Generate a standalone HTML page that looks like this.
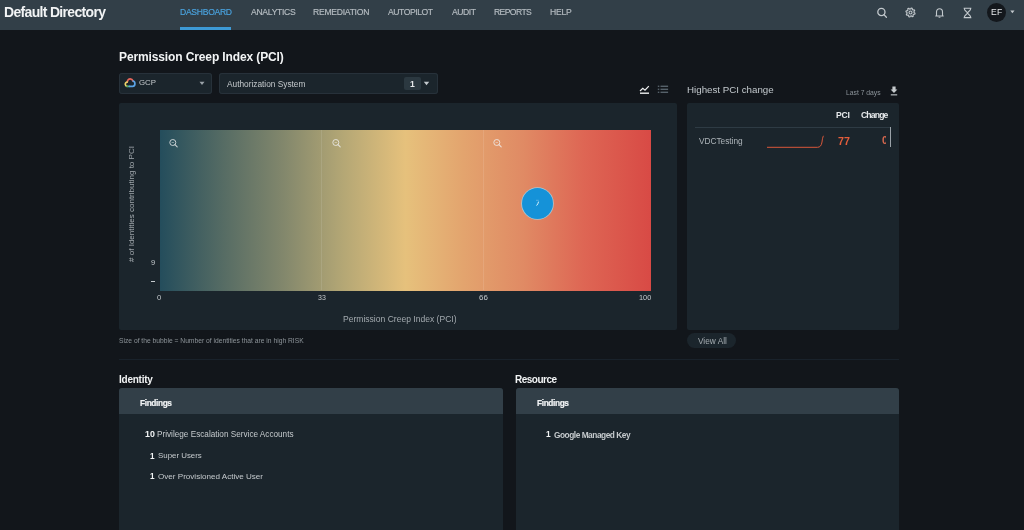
<!DOCTYPE html>
<html><head><meta charset="utf-8"><style>
html,body{margin:0;padding:0;}
body{width:1024px;height:530px;overflow:hidden;background:#12161b;position:relative;font-family:"Liberation Sans",sans-serif;}
body>div,body>svg{position:absolute;}
.t{white-space:nowrap;position:absolute;will-change:transform;}
</style></head><body>
<div style="left:0px;top:0px;width:1024px;height:30px;background:#323f48;"></div>
<div class="t" style="left:4.08px;top:5.21px;font-size:14.000px;line-height:14.000px;font-weight:bold;color:#f2f4f5;letter-spacing:-0.676px;">Default Directory</div>
<div class="t" style="left:179.89px;top:8.17px;font-size:8.600px;line-height:8.600px;font-weight:normal;color:#4aa3df;letter-spacing:-0.295px;-webkit-text-stroke:0.15px currentColor;">DASHBOARD</div>
<div class="t" style="left:250.58px;top:8.17px;font-size:8.600px;line-height:8.600px;font-weight:normal;color:#b7bec3;letter-spacing:-0.294px;-webkit-text-stroke:0.15px currentColor;">ANALYTICS</div>
<div class="t" style="left:313.29px;top:8.17px;font-size:8.600px;line-height:8.600px;font-weight:normal;color:#b7bec3;letter-spacing:-0.268px;-webkit-text-stroke:0.15px currentColor;">REMEDIATION</div>
<div class="t" style="left:387.98px;top:8.17px;font-size:8.600px;line-height:8.600px;font-weight:normal;color:#b7bec3;letter-spacing:-0.434px;-webkit-text-stroke:0.15px currentColor;">AUTOPILOT</div>
<div class="t" style="left:451.88px;top:8.17px;font-size:8.600px;line-height:8.600px;font-weight:normal;color:#b7bec3;letter-spacing:-0.471px;-webkit-text-stroke:0.15px currentColor;">AUDIT</div>
<div class="t" style="left:494.19px;top:8.17px;font-size:8.600px;line-height:8.600px;font-weight:normal;color:#b7bec3;letter-spacing:-0.604px;-webkit-text-stroke:0.15px currentColor;">REPORTS</div>
<div class="t" style="left:550.29px;top:8.17px;font-size:8.600px;line-height:8.600px;font-weight:normal;color:#b7bec3;letter-spacing:-0.237px;-webkit-text-stroke:0.15px currentColor;">HELP</div>
<div style="left:180px;top:27px;width:51px;height:3px;background:#3d9ad6;"></div>
<svg style="left:876px;top:7px" width="12" height="12" viewBox="0 0 12 12"><circle cx="5.4" cy="5" r="3.6" fill="none" stroke="#c3c9cd" stroke-width="1.3"/><path d="M7.9 7.6 L10.4 10.2" stroke="#c3c9cd" stroke-width="1.3" stroke-linecap="round"/></svg>
<svg style="left:905px;top:7px" width="11" height="11" viewBox="0 0 11 11"><path d="M9.00 5.50 L10.05 6.15 L9.75 7.26 L8.51 7.28 L7.97 7.97 L8.26 9.18 L7.26 9.75 L6.37 8.89 L5.50 9.00 L4.85 10.05 L3.74 9.75 L3.72 8.51 L3.03 7.97 L1.82 8.26 L1.25 7.26 L2.11 6.37 L2.00 5.50 L0.95 4.85 L1.25 3.74 L2.49 3.72 L3.03 3.03 L2.74 1.82 L3.74 1.25 L4.63 2.11 L5.50 2.00 L6.15 0.95 L7.26 1.25 L7.28 2.49 L7.97 3.03 L9.18 2.74 L9.75 3.74 L8.89 4.63 Z" fill="none" stroke="#c3c9cd" stroke-width="1.1" stroke-linejoin="round"/><circle cx="5.5" cy="5.5" r="1.5" fill="none" stroke="#c3c9cd" stroke-width="1.1"/></svg>
<svg style="left:934px;top:7px" width="11" height="12" viewBox="0 0 11 12"><path d="M2.5 8.5 L2.5 5 C2.5 3 3.8 1.8 5.5 1.8 C7.2 1.8 8.5 3 8.5 5 L8.5 8.5 M1.3 9 L9.7 9" fill="none" stroke="#c3c9cd" stroke-width="1.1"/><path d="M4.6 10.2 L6.4 10.2" stroke="#c3c9cd" stroke-width="1"/></svg>
<svg style="left:963px;top:7px" width="9" height="12" viewBox="0 0 9 12"><path d="M1.2 1.3 L7.8 1.3 C7.8 4 4.5 5 4.5 6 C4.5 7 7.8 8 7.8 10.6 L1.2 10.6 C1.2 8 4.5 7 4.5 6 C4.5 5 1.2 4 1.2 1.3 Z" fill="none" stroke="#c3c9cd" stroke-width="1.1"/></svg>
<div style="left:987px;top:3px;width:19px;height:19px;border-radius:50%;background:#13171c"></div>
<div class="t" style="left:990.99px;top:8.02px;font-size:8.600px;line-height:8.600px;font-weight:normal;color:#e6e9eb;letter-spacing:0.258px;">EF</div>
<svg style="left:1009.5px;top:10.3px" width="5" height="4" viewBox="0 0 5 4"><path d="M0.3 0.6 L4.5 0.6 L2.4 3.2 Z" fill="#c3c9cd"/></svg>
<div class="t" style="left:119.21px;top:51.06px;font-size:12.000px;line-height:12.000px;font-weight:bold;color:#f2f4f5;letter-spacing:-0.121px;">Permission Creep Index (PCI)</div>
<div style="left:119px;top:73px;width:93px;height:21px;background:#1b252c;border-radius:3px;box-shadow:inset 0 0 0 1px #27313a;"></div>
<svg style="left:124px;top:77px" width="12" height="11" viewBox="0 0 12 11"><g fill="none" stroke-width="1.7" stroke-linejoin="round" stroke-linecap="round"><path d="M3.2 5.0 C3.6 3.0 5.0 1.9 6.2 1.9 C7.6 1.9 8.6 2.8 9.1 4.0" stroke="#e8675c"/><path d="M3.2 5.0 C1.9 5.4 1.2 6.4 1.3 7.5 C1.4 8.4 2.0 9.2 3.0 9.3" stroke="#f0d46a"/><path d="M3.0 9.3 L5.2 9.3" stroke="#4fa85e"/><path d="M9.1 4.0 C10.4 4.4 11.0 5.6 10.9 6.9 C10.8 8.4 9.8 9.3 8.6 9.3 L5.2 9.3" stroke="#5aa3e6"/></g></svg>
<div class="t" style="left:139.41px;top:79.05px;font-size:7.845px;line-height:7.845px;font-weight:normal;color:#c5cacd;">GCP</div>
<svg style="left:199px;top:81px" width="6" height="5" viewBox="0 0 6 5"><path d="M0.5 0.8 L5.5 0.8 L3 4 Z" fill="#9aa2a8"/></svg>
<div style="left:219px;top:73px;width:219px;height:21px;background:#1b252c;border-radius:3px;box-shadow:inset 0 0 0 1px #27313a;"></div>
<div class="t" style="left:226.98px;top:80.22px;font-size:8.314px;line-height:8.314px;font-weight:normal;color:#c5cacd;">Authorization System</div>
<div style="left:404px;top:77px;width:17px;height:13px;background:#2b3840;border-radius:2px;"></div>
<div class="t" style="left:409.97px;top:80.09px;font-size:8.565px;line-height:8.565px;font-weight:bold;color:#e6e9eb;">1</div>
<svg style="left:423px;top:81px" width="7" height="5" viewBox="0 0 7 5"><path d="M0.8 0.8 L6.2 0.8 L3.5 4.2 Z" fill="#c3c9cd"/></svg>
<svg style="left:639px;top:85px" width="11" height="10" viewBox="0 0 11 10"><path d="M1 6 L3.8 3.4 L6 5.2 L9.8 1.2" fill="none" stroke="#eef0f1" stroke-width="1.2"/><path d="M1 8.2 L10 8.2" stroke="#eef0f1" stroke-width="1.4"/></svg>
<svg style="left:657px;top:85px" width="12" height="9" viewBox="0 0 12 9"><g fill="#56616a"><rect x="0.8" y="0.6" width="1.5" height="1.4"/><rect x="3.5" y="0.6" width="7.6" height="1.4"/><rect x="0.8" y="3.6" width="1.5" height="1.4"/><rect x="3.5" y="3.6" width="7.6" height="1.4"/><rect x="0.8" y="6.6" width="1.5" height="1.4"/><rect x="3.5" y="6.6" width="7.6" height="1.4"/></g></svg>
<div style="left:119px;top:103px;width:558px;height:227px;background:#1b252c;border-radius:2px;"></div>
<div style="left:159.5px;top:130px;width:491px;height:160.5px;background:linear-gradient(90deg,#244d5c 0%,#566c64 12.9%,#82876c 25.1%,#b4a775 37.3%,#e6c17c 50%,#e3a46e 61.8%,#e08a64 74.1%,#de6654 86.3%,#d84a45 100%)"></div>
<div style="left:321.2px;top:130px;width:1.0px;height:160px;background:rgba(255,255,255,0.1);"></div>
<div style="left:483.2px;top:130px;width:1.0px;height:160px;background:rgba(255,255,255,0.1);"></div>
<svg style="left:169px;top:138.3px;opacity:0.8" width="10" height="10" viewBox="0 0 10 10"><circle cx="3.8" cy="4.5" r="3.0" fill="none" stroke="#f0f0f0" stroke-width="1.0"/><path d="M2.6 4.5 L5 4.5" stroke="rgba(240,240,240,0.7)" stroke-width="0.8"/><path d="M6.0 6.7 L8.2 8.8" stroke="#f0f0f0" stroke-width="1.1" stroke-linecap="round"/></svg>
<svg style="left:331.5px;top:138.3px;opacity:0.8" width="10" height="10" viewBox="0 0 10 10"><circle cx="3.8" cy="4.5" r="3.0" fill="none" stroke="#f0f0f0" stroke-width="1.0"/><path d="M2.6 4.5 L5 4.5" stroke="rgba(240,240,240,0.7)" stroke-width="0.8"/><path d="M6.0 6.7 L8.2 8.8" stroke="#f0f0f0" stroke-width="1.1" stroke-linecap="round"/></svg>
<svg style="left:493px;top:138.3px;opacity:0.8" width="10" height="10" viewBox="0 0 10 10"><circle cx="3.8" cy="4.5" r="3.0" fill="none" stroke="#f0f0f0" stroke-width="1.0"/><path d="M2.6 4.5 L5 4.5" stroke="rgba(240,240,240,0.7)" stroke-width="0.8"/><path d="M6.0 6.7 L8.2 8.8" stroke="#f0f0f0" stroke-width="1.1" stroke-linecap="round"/></svg>
<div style="left:521.9px;top:187.8px;width:31.4px;height:31.4px;border-radius:50%;background:#1592d8;box-shadow:0 0 0 0.8px #a9c8d4;box-sizing:border-box"></div>
<svg style="left:534px;top:199px" width="6" height="8" viewBox="0 0 6 8"><path d="M2 1.3 L4.8 1.3" stroke="rgba(255,255,255,0.35)" stroke-width="0.8"/><path d="M4.6 2.6 C4.2 4.2 3.6 5.6 2.6 6.6" fill="none" stroke="#d8f4ff" stroke-width="1"/></svg>
<div class="t" style="left:157.30px;top:293.61px;font-size:7.724px;line-height:7.724px;font-weight:normal;color:#c5cacd;">0</div>
<div class="t" style="left:317.53px;top:293.69px;font-size:6.984px;line-height:6.984px;font-weight:normal;color:#c5cacd;">33</div>
<div class="t" style="left:479.40px;top:293.80px;font-size:7.949px;line-height:7.949px;font-weight:normal;color:#c5cacd;">66</div>
<div class="t" style="left:639.44px;top:294.21px;font-size:7.336px;line-height:7.336px;font-weight:normal;color:#c5cacd;">100</div>
<div class="t" style="left:150.66px;top:258.93px;font-size:7.500px;line-height:7.500px;font-weight:normal;color:#c5cacd;letter-spacing:0.527px;">9</div>
<div style="left:151px;top:280.5px;width:4px;height:1.0px;background:#c5cacd;"></div>
<div class="t" style="left:343.00px;top:314.75px;font-size:8.555px;line-height:8.555px;font-weight:normal;color:#a3aaaf;">Permission Creep Index (PCI)</div>
<div class="t" style="left:74.30px;top:200.49px;width:116px;text-align:center;font-size:8.026px;line-height:8.026px;color:#a3aaaf;transform:rotate(-90deg);transform-origin:58px 4.01px;"># of Identities contributing to PCI</div>
<div class="t" style="left:686.70px;top:84.55px;font-size:9.751px;line-height:9.751px;font-weight:normal;color:#c3c9cd;">Highest PCI change</div>
<div class="t" style="left:846.24px;top:89.94px;font-size:6.785px;line-height:6.785px;font-weight:normal;color:#8d959b;">Last 7 days</div>
<svg style="left:890px;top:85.5px" width="8" height="10" viewBox="0 0 8 10"><path d="M2.4 0.6 L5.6 0.6 L5.6 3.6 L7.4 3.6 L4 7.0 L0.6 3.6 L2.4 3.6 Z" fill="#c5cacd"/><rect x="0.8" y="8.3" width="6.4" height="1.1" fill="#c5cacd"/></svg>
<div style="left:687px;top:103px;width:212px;height:227px;background:#1b252c;border-radius:2px;"></div>
<div class="t" style="left:835.93px;top:111.22px;font-size:8.600px;line-height:8.600px;font-weight:bold;color:#e6e9eb;letter-spacing:-0.246px;">PCI</div>
<div class="t" style="left:860.85px;top:111.02px;font-size:8.600px;line-height:8.600px;font-weight:bold;color:#e6e9eb;letter-spacing:-0.838px;">Change</div>
<div style="left:695px;top:127px;width:196px;height:1px;background:#2e3b44;"></div>
<div style="left:890px;top:127px;width:1px;height:20px;background:#9aa2a8;"></div>
<div class="t" style="left:698.77px;top:137.03px;font-size:8.300px;line-height:8.300px;font-weight:normal;color:#aeb5ba;letter-spacing:-0.018px;">VDCTesting</div>
<svg style="left:765px;top:133px" width="62" height="18" viewBox="0 0 62 18"><path d="M2 14.3 L52.5 14.3 C55 14.3 56.5 12.5 57 9 C57.4 6 57.8 4 58.5 2.8" fill="none" stroke="#d9573a" stroke-width="1"/></svg>
<div class="t" style="left:837.75px;top:135.51px;font-size:10.711px;line-height:10.711px;font-weight:bold;color:#e55d3b;">77</div>
<div style="left:870px;top:130px;width:15.9px;height:20px;overflow:hidden">
<div class="t" style="left:11.59px;top:5.12px;font-size:10.500px;line-height:10.500px;font-weight:bold;color:#d9694f;letter-spacing:-0.109px;">0</div>
</div>
<div style="left:687.4px;top:333.4px;width:48.6px;height:15px;border-radius:8px;background:#1b252c"></div>
<div class="t" style="left:697.87px;top:337.43px;font-size:8.292px;line-height:8.292px;font-weight:normal;color:#a6adb2;">View All</div>
<div class="t" style="left:119.00px;top:338.37px;font-size:6.719px;line-height:6.719px;font-weight:normal;color:#8d9499;">Size of the bubble = Number of identities that are in high RISK</div>
<div style="left:119px;top:359px;width:780px;height:1px;background:#19222b;"></div>
<div class="t" style="left:119.04px;top:374.77px;font-size:10.000px;line-height:10.000px;font-weight:bold;color:#f2f4f5;letter-spacing:-0.250px;">Identity</div>
<div class="t" style="left:515.34px;top:374.87px;font-size:10.000px;line-height:10.000px;font-weight:bold;color:#f2f4f5;letter-spacing:-0.510px;">Resource</div>
<div style="left:119.3px;top:388px;width:383.7px;height:142px;background:#1b252c;border-radius:3px 3px 0 0;"></div>
<div style="left:119.3px;top:388px;width:383.7px;height:25.7px;background:#323f48;border-radius:3px 3px 0 0;"></div>
<div style="left:516px;top:388px;width:383.1px;height:142px;background:#1b252c;border-radius:3px 3px 0 0;"></div>
<div style="left:516px;top:388px;width:383.1px;height:25.7px;background:#323f48;border-radius:3px 3px 0 0;"></div>
<div class="t" style="left:140.35px;top:399.43px;font-size:8.300px;line-height:8.300px;font-weight:bold;color:#f2f4f5;letter-spacing:-0.371px;-webkit-text-stroke:0.2px currentColor;">Findings</div>
<div class="t" style="left:537.15px;top:399.43px;font-size:8.300px;line-height:8.300px;font-weight:bold;color:#f2f4f5;letter-spacing:-0.371px;-webkit-text-stroke:0.2px currentColor;">Findings</div>
<div class="t" style="left:145.35px;top:430.37px;font-size:8.812px;line-height:8.812px;font-weight:bold;color:#f2f4f5;">10</div>
<div class="t" style="left:157.33px;top:431.17px;font-size:8.208px;line-height:8.208px;font-weight:normal;color:#c5cacd;">Privilege Escalation Service Accounts</div>
<div class="t" style="left:149.70px;top:452.61px;font-size:8.137px;line-height:8.137px;font-weight:bold;color:#f2f4f5;">1</div>
<div class="t" style="left:157.64px;top:452.03px;font-size:7.897px;line-height:7.897px;font-weight:normal;color:#c5cacd;">Super Users</div>
<div class="t" style="left:149.70px;top:473.26px;font-size:8.137px;line-height:8.137px;font-weight:bold;color:#f2f4f5;">1</div>
<div class="t" style="left:157.62px;top:472.78px;font-size:8.090px;line-height:8.090px;font-weight:normal;color:#c5cacd;">Over Provisioned Active User</div>
<div class="t" style="left:545.89px;top:430.48px;font-size:8.300px;line-height:8.300px;font-weight:bold;color:#f2f4f5;letter-spacing:-0.476px;">1</div>
<div class="t" style="left:553.66px;top:430.98px;font-size:8.300px;line-height:8.300px;font-weight:bold;color:#c5cacd;letter-spacing:-0.460px;">Google Managed Key</div>
</body></html>
